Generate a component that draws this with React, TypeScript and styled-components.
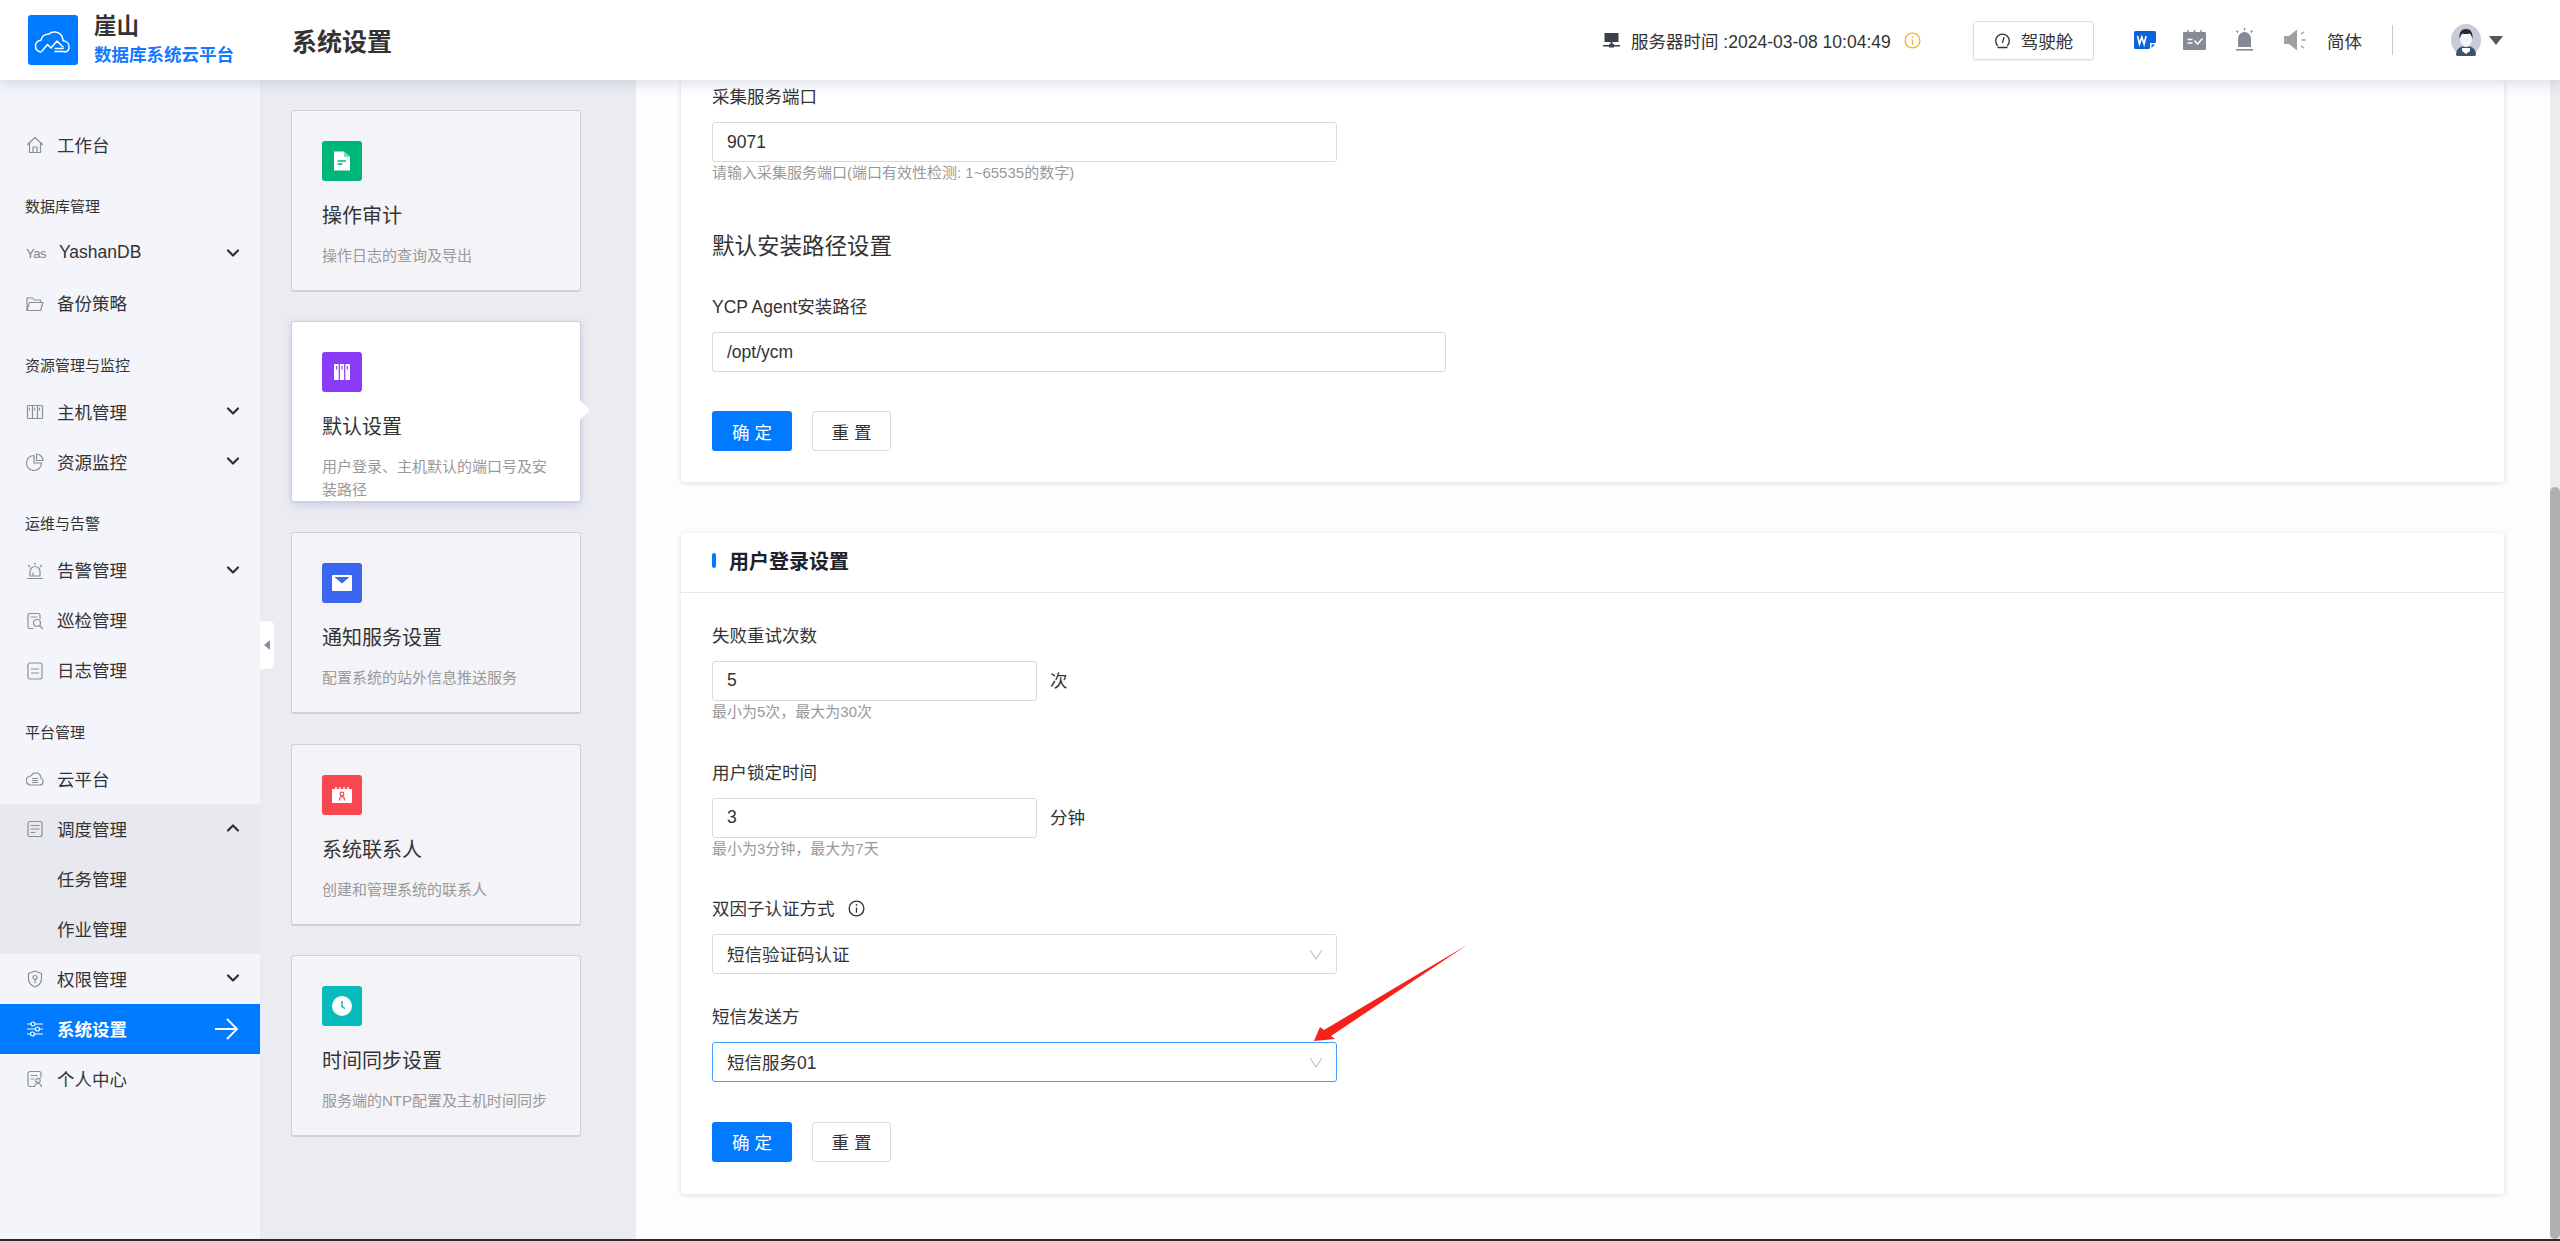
import type { ReactNode } from "react";
import { ChevronDown, ChevronUp } from "lucide-react";
import styled, { createGlobalStyle } from "styled-components";

const FONT = `"Liberation Sans", "Noto Sans CJK SC", sans-serif`;
const BLUE = "#007bff";

const GlobalStyle = createGlobalStyle`
  html, body {
    margin: 0;
    padding: 0;
    height: 100%;
    overflow: hidden;
  }
  body {
    font-family: ${FONT};
    color: #333;
    background: #fff;
  }
  * {
    box-sizing: border-box;
  }
`;

/* ---- icons ---- */

const Line = ({ children }: { children: ReactNode }) => (
  <svg width="18" height="18" viewBox="0 0 18 18" fill="none" stroke="currentColor" strokeWidth="1.2" strokeLinecap="round" strokeLinejoin="round">
    {children}
  </svg>
);

const HomeIcon = () => (
  <Line>
    <path d="M1.5 8.5 9 1.5l7.500 7M3.500 7v9.500h11V7" />
    <path d="M7 16.500v-5.500h4v5.500" />
  </Line>
);
const YasIcon = () => <YasMark>Yas</YasMark>;
const FolderIcon = () => (
  <Line>
    <path d="M1 15.500V3h5.500l1.500 2h6.500v2.500" />
    <path d="M1 15.500 3.500 7.500H17l-2.500 8z" />
  </Line>
);
const HostIcon = () => (
  <Line>
    <rect x="1.500" y="2.500" width="15" height="13" rx="1" />
    <path d="M6.500 2.500v13M11.500 2.500v13M3.500 5v2M8.500 5v2M13.500 5v2" />
  </Line>
);
const PieIcon = () => (
  <Line>
    <path d="M8 2.500A7.500 7.500 0 1 0 15.500 10H8z" />
    <path d="M10.500 1a7 7 0 0 1 6.500 6.500h-6.500z" />
  </Line>
);
const AlarmIcon = () => (
  <Line>
    <path d="M4 14V9.500a5 5 0 0 1 10 0V14zM7 14v-3M1.500 16.500h15" />
    <path d="M9 1v1.500M2.500 3.500l1.300 1.300M15.500 3.500l-1.300 1.300" />
  </Line>
);
const InspectIcon = () => (
  <Line>
    <path d="M7 16.500H4a2 2 0 0 1-2-2v-11a2 2 0 0 1 2-2h8a2 2 0 0 1 2 2v3" />
    <circle cx="11" cy="11" r="3.500" />
    <path d="m13.500 13.500 3 3M5 5h6" />
  </Line>
);
const LogIcon = () => (
  <Line>
    <rect x="2" y="1" width="14" height="16" rx="2" />
    <path d="M5.500 7h7M5.500 11h7" />
  </Line>
);
const CloudIcon = () => (
  <Line>
    <path d="M4.500 15h9a3.500 3.500 0 0 0 1.500-6.700A5 5 0 0 0 9.500 3 5 5 0 0 0 5 6a4.500 4.500 0 0 0-.5 9z" />
    <path d="M6.500 8.500h5M6.500 10.500h5M6.500 12.500h5" />
  </Line>
);
const TaskIcon = () => (
  <Line>
    <rect x="2" y="1.500" width="14" height="15" rx="2" />
    <path d="M5 5.500h8M5 9h8M5 12.500h4" />
  </Line>
);
const ShieldIcon = () => (
  <Line>
    <path d="M9 1 2.500 3.500V9c0 4 3 6.500 6.500 8 3.500-1.500 6.500-4 6.500-8V3.500z" />
    <circle cx="9" cy="7.500" r="2" />
    <path d="M9 9.500V13" />
  </Line>
);
const SlidersIcon = () => (
  <Line>
    <path d="M1.500 4h3.500M9 4h7.500M1.500 9h8M13.500 9h3M1.500 14h3M8.500 14h8" />
    <circle cx="7" cy="4" r="2" />
    <circle cx="11.500" cy="9" r="2" />
    <circle cx="6.500" cy="14" r="2" />
  </Line>
);
const ProfileIcon = () => (
  <Line>
    <path d="M8 16.500H4a2 2 0 0 1-2-2v-11a2 2 0 0 1 2-2h9a2 2 0 0 1 2 2v4M5 5.500h6M5 9h3" />
    <circle cx="12" cy="10.500" r="2.200" />
    <path d="M8.500 16.500c.3-2 1.700-3 3.500-3s3.200 1 3.500 3" />
  </Line>
);

const LogoIcon = () => (
  <svg width="50" height="50" viewBox="0 0 50 50" fill="none" stroke="#fff" strokeWidth="1.500" strokeLinecap="round" strokeLinejoin="round">
    <path d="M13 37c-3.500-.5-5.500-3-5.500-6 0-3 2.300-5.600 5.500-5.800.7-4 4-6.500 7.500-6 1.800-1.600 4-2.400 6.500-2.200 4 .3 7 3.200 7.800 7 .2.8.3 1.200.3 1.800 3.600.3 6 2.800 6 6 0 3-2 5-4.500 5.200" />
    <path d="m14 36 5.500-6.500L23 33l6-7 6 6" />
    <path d="M27 33.500h8M27 36.500h9" />
  </svg>
);

const Tile = ({ children }: { children: ReactNode }) => (
  <svg width="24" height="24" viewBox="0 0 24 24">
    {children}
  </svg>
);

const DocTile = () => (
  <Tile>
    <path d="M4 2.500h10l6 5.500v13.500H4z" fill="#fff" />
    <path d="M14 2.500 20 8h-6z" fill="#7fdcbb" />
    <path d="M7.500 12h8.500M7.500 15h5" stroke="#00b578" strokeWidth="1.600" />
  </Tile>
);
const ServerTile = () => (
  <Tile>
    <rect x="4" y="4" width="16" height="16" rx="1" fill="#fff" />
    <path d="M9.300 4v16M14.700 4v16M6.700 6v3.500M12 6v3.500M17.300 6v3.500" stroke="#8b3bf5" strokeWidth="1.200" />
  </Tile>
);
const MailTile = () => (
  <Tile>
    <rect x="2" y="4" width="20" height="16" rx="1" fill="#fff" />
    <path d="M4.500 6h15L12 12.500z" fill="#3b66ee" />
  </Tile>
);
const ContactTile = () => (
  <Tile>
    <rect x="2" y="6" width="20" height="14" rx="1" fill="#fff" />
    <path d="M6 4v3M10 4v3M14 4v3M18 4v3" stroke="#fff" strokeWidth="1.400" />
    <circle cx="12" cy="11" r="1.800" fill="none" stroke="#f9474f" strokeWidth="1.300" />
    <path d="M9.500 17.500c0-2.500 .8-3.800 2.500-3.800s2.500 1.300 2.500 3.800" fill="none" stroke="#f9474f" strokeWidth="1.300" />
  </Tile>
);
const ClockTile = () => (
  <Tile>
    <circle cx="12" cy="12" r="10" fill="#fff" />
    <path d="M12 7v5.500l3 2" fill="none" stroke="#07bbbd" strokeWidth="1.500" />
  </Tile>
);

const ServerIcon = () => (
  <svg width="17" height="17" viewBox="0 0 17 17" fill="#3c4149">
    <rect x="1.500" y="1" width="14" height="9" rx="0.500" />
    <rect x="7.500" y="10" width="2" height="3" />
    <rect x="0" y="13" width="17" height="1.500" />
    <rect x="6" y="12" width="5" height="3.500" />
  </svg>
);
const InfoIcon = ({ color, size }: { color: string; size: number }) => (
  <svg width={size} height={size} viewBox="0 0 18 18" fill="none" stroke={color} strokeWidth="1.400">
    <circle cx="9" cy="9" r="7.800" />
    <path d="M9 8v5.500" />
    <circle cx="9" cy="5.200" r="0.900" fill={color} stroke="none" />
  </svg>
);
const GaugeIcon = () => (
  <svg width="17" height="17" viewBox="0 0 17 17" fill="none" stroke="#333" strokeWidth="1.300" strokeLinecap="round">
    <path d="M3.500 13.500a6.800 6.800 0 1 1 10 0" />
    <path d="M8.500 10.500 10 5.500M4 15.500h9" />
  </svg>
);
const WordIcon = () => (
  <svg width="22" height="18" viewBox="0 0 22 18">
    <path d="M1.500 0h19A1.500 1.500 0 0 1 22 1.500V11l-7 7H1.500A1.500 1.500 0 0 1 0 16.500v-15A1.500 1.500 0 0 1 1.500 0z" fill="#0b63d6" />
    <path d="M3.500 5l2 8 2.300-7 2.300 7 2-8" fill="none" stroke="#fff" strokeWidth="1.600" />
    <path d="M16 18v-6h6z" fill="#fff" />
    <path d="M17.500 17v-3.500H21z" fill="#0b63d6" />
  </svg>
);
const ScheduleIcon = () => (
  <svg width="23" height="20" viewBox="0 0 23 20">
    <rect x="0" y="2" width="23" height="18" rx="1" fill="#858a95" />
    <path d="M5 0v4M11.500 0v4M18 0v4" stroke="#858a95" strokeWidth="1.500" />
    <path d="M4.500 9.500h5M4.500 13h5M11.500 10.500l3 3.500 5-5.500" fill="none" stroke="#fff" strokeWidth="1.500" />
  </svg>
);
const SirenIcon = () => (
  <svg width="19" height="24" viewBox="0 0 19 24" fill="#858a95">
    <path d="M3 19v-8.500a6.500 6.500 0 0 1 13 0V19z" />
    <rect x="1" y="21" width="17" height="1.600" />
    <path d="M9.500 0v2.500M1.500 2.500l1.800 2M17.500 2.500l-1.800 2" stroke="#858a95" strokeWidth="1.300" />
  </svg>
);
const SpeakerIcon = () => (
  <svg width="22" height="22" viewBox="0 0 22 22" fill="#a0a0a0">
    <path d="M0 7h5l8-6.500v21L5 15H0z" />
    <path d="m17 5 3-2M17.500 11h4M17 17l3 2" stroke="#a0a0a0" strokeWidth="1.500" />
  </svg>
);
const Avatar = () => (
  <svg width="30" height="32" viewBox="0 0 30 32">
    <ellipse cx="15" cy="16" rx="15" ry="16" fill="#c8ccd6" />
    <path d="M5 31c0-6 4-9 10-9s10 3 10 9a15 15 0 0 1-20 0z" fill="#3d5173" />
    <path d="M11 24h8v3l-4 3-4-3z" fill="#fff" />
    <ellipse cx="15" cy="15" rx="6" ry="8" fill="#f4f5f7" />
    <path d="M8.500 15c-.5-7 2-10 6.500-10s7 3 6.500 10c-1-3-1.500-5-3-5.500-2.500.7-5 .7-7 0-1.500 1-2 3-3 5.500z" fill="#222b3a" />
  </svg>
);

/* ---- data ---- */

type MenuEntry =
  | { kind: "group"; label: string }
  | { kind: "item"; label: string; icon: () => ReactNode; fold?: "open" | "closed" }
  | { kind: "block"; label: string; icon: () => ReactNode; children: string[] }
  | { kind: "active"; label: string; icon: () => ReactNode };

const MENU: MenuEntry[] = [
  { kind: "item", label: "工作台", icon: HomeIcon },
  { kind: "group", label: "数据库管理" },
  { kind: "item", label: "YashanDB", icon: YasIcon, fold: "closed" },
  { kind: "item", label: "备份策略", icon: FolderIcon },
  { kind: "group", label: "资源管理与监控" },
  { kind: "item", label: "主机管理", icon: HostIcon, fold: "closed" },
  { kind: "item", label: "资源监控", icon: PieIcon, fold: "closed" },
  { kind: "group", label: "运维与告警" },
  { kind: "item", label: "告警管理", icon: AlarmIcon, fold: "closed" },
  { kind: "item", label: "巡检管理", icon: InspectIcon },
  { kind: "item", label: "日志管理", icon: LogIcon },
  { kind: "group", label: "平台管理" },
  { kind: "item", label: "云平台", icon: CloudIcon },
  { kind: "block", label: "调度管理", icon: TaskIcon, children: ["任务管理", "作业管理"] },
  { kind: "item", label: "权限管理", icon: ShieldIcon, fold: "closed" },
  { kind: "active", label: "系统设置", icon: SlidersIcon },
  { kind: "item", label: "个人中心", icon: ProfileIcon },
];

const CARDS = [
  { title: "操作审计", desc: "操作日志的查询及导出", color: "#00b578", icon: DocTile },
  { title: "默认设置", desc: "用户登录、主机默认的端口号及安装路径", color: "#8b3bf5", icon: ServerTile, active: true },
  { title: "通知服务设置", desc: "配置系统的站外信息推送服务", color: "#3b66ee", icon: MailTile },
  { title: "系统联系人", desc: "创建和管理系统的联系人", color: "#f9474f", icon: ContactTile },
  { title: "时间同步设置", desc: "服务端的NTP配置及主机时间同步", color: "#07bbbd", icon: ClockTile },
];

/* ---- page ---- */

const App = () => (
  <Page>
    <GlobalStyle />
    <Header>
      <Brand>
        <LogoBox>
          <LogoIcon />
        </LogoBox>
        <BrandText>
          <BrandName>崖山</BrandName>
          <BrandSub>数据库系统云平台</BrandSub>
        </BrandText>
      </Brand>
      <PageTitle>系统设置</PageTitle>
      <HeaderRight>
        <Slot>
          <ServerIcon />
        </Slot>
        <ServerTime $ml={11}>服务器时间 :2024-03-08 10:04:49</ServerTime>
        <Slot $ml={12}>
          <InfoIcon color="#f5b133" size={17} />
        </Slot>
        <CockpitButton $ml={52}>
          <GaugeIcon />
          驾驶舱
        </CockpitButton>
        <Slot $ml={40}>
          <WordIcon />
        </Slot>
        <Slot $ml={27}>
          <ScheduleIcon />
        </Slot>
        <Slot $ml={29}>
          <SirenIcon />
        </Slot>
        <Slot $ml={30}>
          <SpeakerIcon />
        </Slot>
        <LangText $ml={21}>简体</LangText>
        <HeaderDivider $ml={30} />
        <Slot $ml={58}>
          <Avatar />
        </Slot>
        <Caret $ml={8} />
      </HeaderRight>
    </Header>

    <Body>
      <Sidebar>
        {MENU.map((entry) => {
          if (entry.kind === "group") return <GroupTitle key={entry.label}>{entry.label}</GroupTitle>;
          const Icon = entry.icon;
          if (entry.kind === "block") {
            return (
              <SubBlock key={entry.label}>
                <MenuItem>
                  <MenuIcon>
                    <Icon />
                  </MenuIcon>
                  <MenuLabel>{entry.label}</MenuLabel>
                  <Fold>
                    <ChevronUp size={20} strokeWidth={2.6} />
                  </Fold>
                </MenuItem>
                {entry.children.map((child) => (
                  <SubItem key={child}>{child}</SubItem>
                ))}
              </SubBlock>
            );
          }
          if (entry.kind === "active") {
            return (
              <ActiveItem key={entry.label}>
                <MenuIcon $active>
                  <Icon />
                </MenuIcon>
                <ActiveLabel>{entry.label}</ActiveLabel>
                <svg width="24" height="24" viewBox="0 0 24 24" fill="none" stroke="#fff" strokeWidth="1.800">
                  <path d="M1 12h21M13 2l10 10-10 10" />
                </svg>
              </ActiveItem>
            );
          }
          return (
            <MenuItem key={entry.label}>
              <MenuIcon>
                <Icon />
              </MenuIcon>
              <MenuLabel>{entry.label}</MenuLabel>
              {entry.fold && (
                <Fold>
                  <ChevronDown size={20} strokeWidth={2.6} />
                </Fold>
              )}
            </MenuItem>
          );
        })}
        <CollapseHandle />
      </Sidebar>

      <CardColumn>
        {CARDS.map((card) => {
          const Icon = card.icon;
          return (
            <Card key={card.title} $active={card.active}>
              <CardIcon $color={card.color}>
                <Icon />
              </CardIcon>
              <CardTitle>{card.title}</CardTitle>
              <CardDesc>{card.desc}</CardDesc>
            </Card>
          );
        })}
      </CardColumn>

      <ScrollArea>
        <TopPanel>
          <Field>
            <FieldLabel>采集服务端口</FieldLabel>
            <InputBox $width={625}>9071</InputBox>
            <Hint>请输入采集服务端口(端口有效性检测: 1~65535的数字)</Hint>
          </Field>
          <SectionHeading>默认安装路径设置</SectionHeading>
          <Field>
            <FieldLabel>YCP Agent安装路径</FieldLabel>
            <InputBox $width={734}>/opt/ycm</InputBox>
          </Field>
          <Actions $top={39}>
            <PrimaryButton>确 定</PrimaryButton>
            <GhostButton>重 置</GhostButton>
          </Actions>
        </TopPanel>

        <LoginPanel>
          <PanelHeader>
            <PanelTitle>用户登录设置</PanelTitle>
          </PanelHeader>
          <PanelBody>
            <Field $gap={40}>
              <FieldLabel>失败重试次数</FieldLabel>
              <InputRow>
                <InputBox $width={325}>5</InputBox>
                <Unit>次</Unit>
              </InputRow>
              <Hint>最小为5次，最大为30次</Hint>
            </Field>
            <Field $gap={39}>
              <FieldLabel>用户锁定时间</FieldLabel>
              <InputRow>
                <InputBox $width={325}>3</InputBox>
                <Unit>分钟</Unit>
              </InputRow>
              <Hint>最小为3分钟，最大为7天</Hint>
            </Field>
            <Field $gap={32}>
              <FieldLabel>
                双因子认证方式
                <InfoIcon color="#333" size={17} />
              </FieldLabel>
              <InputBox $width={625}>
                短信验证码认证
                <SelectArrow />
              </InputBox>
            </Field>
            <Field $gap={0}>
              <FieldLabel>短信发送方</FieldLabel>
              <InputBox $width={625} $focused>
                短信服务01
                <SelectArrow />
              </InputBox>
            </Field>
            <Actions $top={40}>
              <PrimaryButton>确 定</PrimaryButton>
              <GhostButton>重 置</GhostButton>
            </Actions>
          </PanelBody>
          <RedArrow width="160" height="102" viewBox="0 0 160 102">
            <path d="M3 98 9 84 13 87 156 2 20 93 24 96z" fill="#f5211b" />
          </RedArrow>
        </LoginPanel>
      </ScrollArea>

      <ScrollTrack>
        <ScrollThumb />
      </ScrollTrack>
    </Body>
    <BottomEdge />
  </Page>
);

const SelectArrow = () => (
  <ArrowSlot width="14" height="11" viewBox="0 0 14 11" fill="none" stroke="#c4c4c4" strokeWidth="1.200">
    <path d="M1 1l6 9 6-9" />
  </ArrowSlot>
);

const Page = styled.div`
  display: flex;
  flex-direction: column;
  width: 2560px;
  height: 1241px;
  overflow: hidden;
`;

const Header = styled.header`
  position: relative;
  z-index: 5;
  flex: 0 0 80px;
  display: flex;
  align-items: center;
  background: #fff;
  box-shadow: 0 2px 14px rgba(70, 80, 130, 0.22);
`;

const Brand = styled.div`
  width: 292px;
  padding-left: 28px;
  display: flex;
  align-items: center;
  gap: 16px;
`;

const LogoBox = styled.div`
  width: 50px;
  height: 50px;
  border-radius: 3px;
  background: ${BLUE};
`;

const BrandText = styled.div`
  display: flex;
  flex-direction: column;
`;

const BrandName = styled.div`
  font-size: 22.5px;
  line-height: 30px;
  font-weight: 700;
  color: #333;
`;

const BrandSub = styled.div`
  font-size: 17.5px;
  line-height: 26px;
  font-weight: 700;
  color: #1677ff;
  white-space: nowrap;
`;

const PageTitle = styled.h1`
  margin: 0;
  font-size: 25px;
  font-weight: 700;
  color: #333;
`;

const HeaderRight = styled.div`
  margin-left: auto;
  padding-right: 57px;
  display: flex;
  align-items: center;
  font-size: 17.5px;
`;

const Slot = styled.div<{ $ml?: number }>`
  display: flex;
  align-items: center;
  margin-left: ${(p) => p.$ml ?? 0}px;
`;

const ServerTime = styled.span<{ $ml: number }>`
  margin-left: ${(p) => p.$ml}px;
  width: 261px;
  white-space: nowrap;
  color: #333;
`;

const CockpitButton = styled.div<{ $ml: number }>`
  margin-left: ${(p) => p.$ml}px;
  width: 121px;
  height: 39px;
  display: flex;
  align-items: center;
  justify-content: center;
  gap: 10px;
  border: 1px solid #dcdcdc;
  border-radius: 3px;
  box-shadow: 0 1px 2px rgba(0, 0, 0, 0.08);
`;

const LangText = styled.span<{ $ml: number }>`
  margin-left: ${(p) => p.$ml}px;
  color: #333;
`;

const HeaderDivider = styled.div<{ $ml: number }>`
  margin-left: ${(p) => p.$ml}px;
  width: 1px;
  height: 30px;
  background: #c9c9c9;
`;

const Caret = styled.div<{ $ml: number }>`
  margin-left: ${(p) => p.$ml}px;
  width: 0;
  height: 0;
  border-left: 7.5px solid transparent;
  border-right: 7.5px solid transparent;
  border-top: 9px solid #555;
`;

const Body = styled.div`
  flex: 1;
  min-height: 0;
  display: flex;
`;

const Sidebar = styled.nav`
  position: relative;
  flex: 0 0 260px;
  padding-top: 40px;
  background: #f3f5fb;
`;

const GroupTitle = styled.div`
  height: 58.5px;
  padding: 26px 0 0 25px;
  font-size: 15px;
  line-height: 22px;
  color: #333;
`;

const MenuItem = styled.div`
  height: 50px;
  padding: 0 17px 0 26px;
  display: flex;
  align-items: center;
  gap: 13px;
  font-size: 17.5px;
  color: #333;
`;

const MenuIcon = styled.span<{ $active?: boolean }>`
  flex: 0 0 18px;
  height: 18px;
  display: flex;
  align-items: center;
  justify-content: center;
  color: ${(p) => (p.$active ? "#fff" : "#8b8f99")};
`;

const YasMark = styled.span`
  font-size: 13px;
  letter-spacing: -0.5px;
  white-space: nowrap;
  color: #7c808a;
`;

const MenuLabel = styled.span`
  flex: 1;
  padding-bottom: 2px;
  white-space: nowrap;
`;

const Fold = styled.span`
  display: flex;
  padding-bottom: 2px;
  color: #2c2f36;
`;

const SubBlock = styled.div`
  background: #e8e9ee;
`;

const SubItem = styled.div`
  height: 50px;
  padding: 0 0 2px 57px;
  display: flex;
  align-items: center;
  font-size: 17.5px;
  color: #333;
`;

const ActiveItem = styled(MenuItem)`
  padding-right: 22px;
  background: ${BLUE};
  color: #fff;
`;

const ActiveLabel = styled(MenuLabel)`
  font-weight: 700;
`;

const CollapseHandle = styled.div`
  position: absolute;
  z-index: 2;
  left: 260px;
  top: 541px;
  width: 14px;
  height: 48px;
  border-radius: 0 5px 5px 0;
  background: #fff;

  &::after {
    content: "";
    position: absolute;
    left: 4px;
    top: 19px;
    border-top: 5px solid transparent;
    border-bottom: 5px solid transparent;
    border-right: 6px solid #8b8f99;
  }
`;

const CardColumn = styled.section`
  flex: 0 0 376px;
  padding: 30px 0 0 31px;
  display: flex;
  flex-direction: column;
  gap: 29.2px;
  background: #ebecf1;
`;

const Card = styled.article<{ $active?: boolean }>`
  position: relative;
  width: 290px;
  height: 182px;
  padding: 30px;
  border: 1px solid #cfd0dc;
  border-bottom-width: 2px;
  border-radius: 3px;
  background: ${(p) => (p.$active ? "#fff" : "#f4f4f8")};
  box-shadow: ${(p) => (p.$active ? "0 2px 10px rgba(80, 100, 200, 0.22)" : "none")};

  ${(p) =>
    p.$active &&
    `&::after {
      content: "";
      position: absolute;
      right: -7px;
      top: 81px;
      width: 14px;
      height: 14px;
      background: #fff;
      transform: rotate(45deg);
      border-radius: 2px;
    }`}
`;

const CardIcon = styled.div<{ $color: string }>`
  width: 40px;
  height: 40px;
  border-radius: 3px;
  display: flex;
  align-items: center;
  justify-content: center;
  background: ${(p) => p.$color};
`;

const CardTitle = styled.div`
  margin-top: 21px;
  font-size: 20px;
  line-height: 28px;
  color: #333;
`;

const CardDesc = styled.div`
  margin-top: 14px;
  font-size: 15px;
  line-height: 23px;
  color: #999;
`;

const ScrollArea = styled.main`
  flex: 1;
  min-width: 0;
  padding: 0 46px 0 45px;
  background: #fdfdfe;
`;

const PanelBase = styled.div`
  position: relative;
  background: #fff;
  border-radius: 3px;
  box-shadow: 0 1px 5px rgba(80, 90, 140, 0.2);
`;

const TopPanel = styled(PanelBase)`
  height: 401.5px;
  padding: 6px 31px 0;
`;

const LoginPanel = styled(PanelBase)`
  margin-top: 51px;
  height: 661px;
`;

const PanelHeader = styled.div`
  height: 60px;
  padding: 0 0 3px 31px;
  display: flex;
  align-items: center;
  border-bottom: 1px solid #e6e7ec;
`;

const PanelTitle = styled.h2`
  margin: 0;
  padding-left: 17px;
  position: relative;
  font-size: 20px;
  font-weight: 700;
  color: #1d2129;

  &::before {
    content: "";
    position: absolute;
    left: 0;
    top: 50%;
    width: 4px;
    height: 15px;
    margin-top: -8px;
    border-radius: 2px;
    background: ${BLUE};
  }
`;

const PanelBody = styled.div`
  padding: 32px 31px 0;
`;

const Field = styled.div<{ $gap?: number }>`
  margin-bottom: ${(p) => p.$gap ?? 0}px;
`;

const FieldLabel = styled.label`
  display: flex;
  align-items: center;
  gap: 13px;
  height: 22px;
  margin-bottom: 14px;
  font-size: 17.5px;
  line-height: 22px;
  color: #333;
`;

const InputRow = styled.div`
  display: flex;
  align-items: center;
  gap: 13px;
`;

const InputBox = styled.div<{ $width: number; $focused?: boolean }>`
  position: relative;
  width: ${(p) => p.$width}px;
  height: 40px;
  padding: 0 14px;
  display: flex;
  align-items: center;
  border: 1px solid ${(p) => (p.$focused ? "#409eff" : "#d9d9d9")};
  border-radius: 3px;
  background: #fff;
  font-size: 17.5px;
  color: #333;
`;

const ArrowSlot = styled.svg`
  position: absolute;
  right: 13px;
  top: 14px;
`;

const Unit = styled.span`
  padding-bottom: 2px;
  font-size: 17.5px;
  color: #333;
`;

const Hint = styled.div`
  margin-top: 1px;
  font-size: 15px;
  line-height: 20px;
  color: #999;
`;

const SectionHeading = styled.h3`
  margin: 49px 0 34px;
  font-size: 22.5px;
  font-weight: 400;
  line-height: 30px;
  color: #333;
`;

const Actions = styled.div<{ $top: number }>`
  margin-top: ${(p) => p.$top}px;
  display: flex;
  gap: 20px;
`;

const PrimaryButton = styled.button`
  width: 80px;
  height: 40px;
  padding: 0;
  border: none;
  border-radius: 3px;
  background: ${BLUE};
  font-family: ${FONT};
  font-size: 17.5px;
  color: #fff;
`;

const GhostButton = styled.button`
  width: 79px;
  height: 40px;
  padding: 0;
  border: 1px solid #dcdcdc;
  border-radius: 3px;
  background: #fff;
  font-family: ${FONT};
  font-size: 17.5px;
  color: #333;
`;

const RedArrow = styled.svg`
  position: absolute;
  left: 630px;
  top: 410px;
`;

const ScrollTrack = styled.aside`
  flex: 0 0 10px;
  padding-top: 407px;
  background: #ececec;
`;

const ScrollThumb = styled.div`
  height: 752px;
  border-radius: 5px;
  background: #b0b0b0;
`;

const BottomEdge = styled.div`
  flex: 0 0 2px;
  background: #2b2b2b;
`;

export default App;
